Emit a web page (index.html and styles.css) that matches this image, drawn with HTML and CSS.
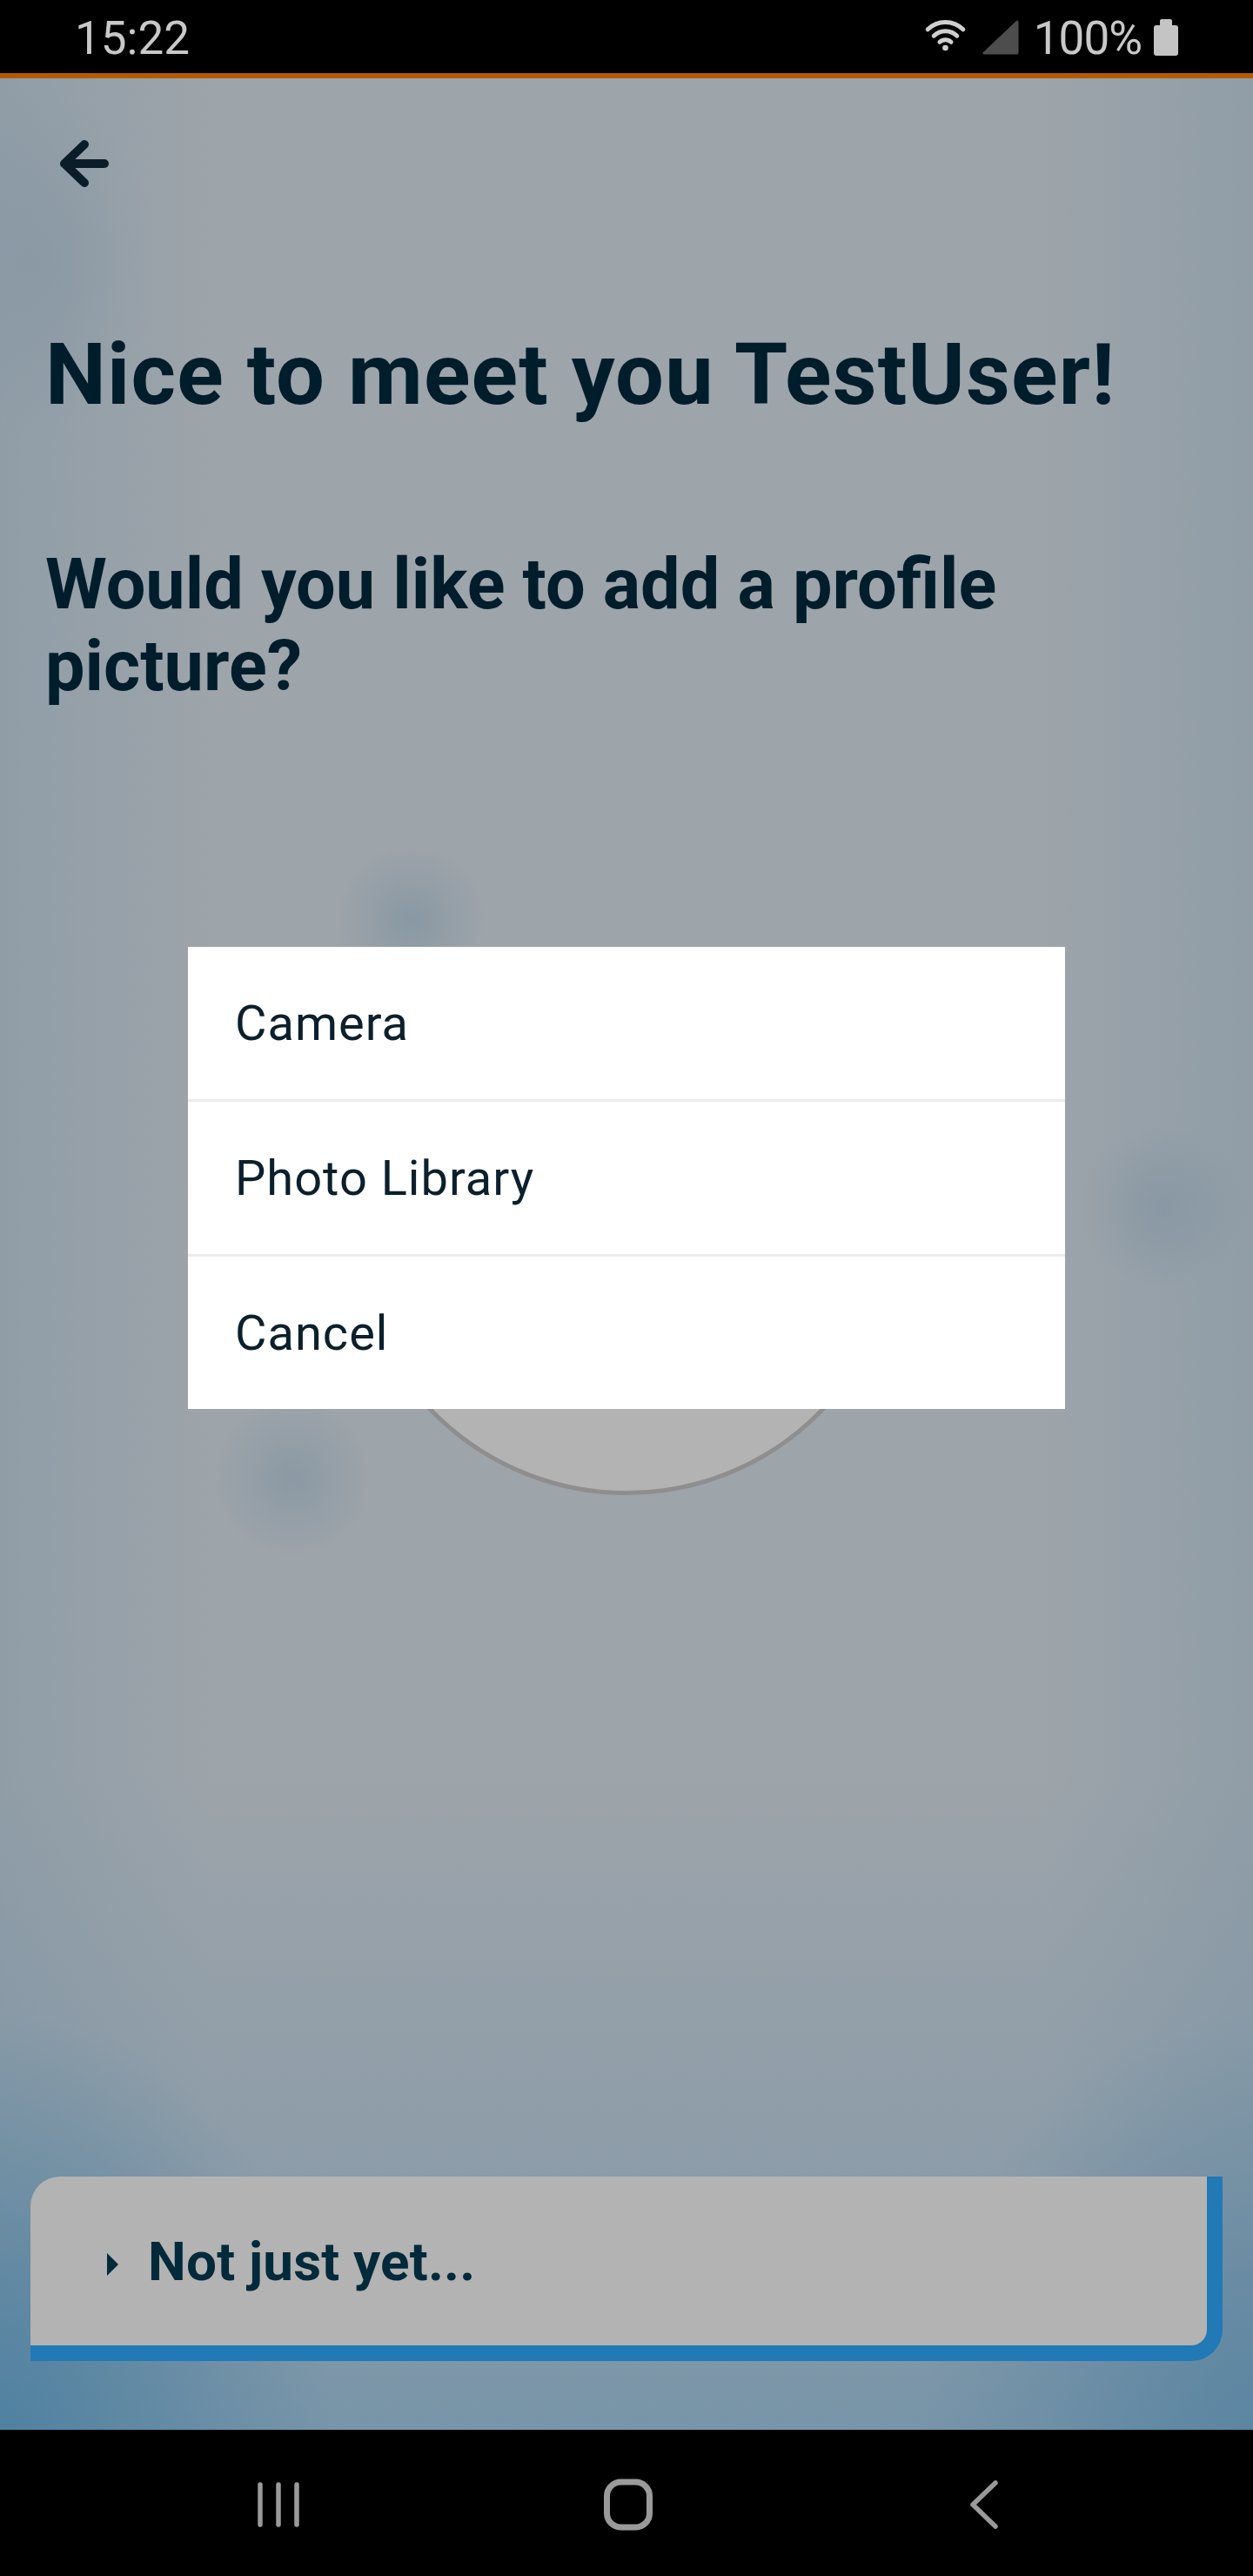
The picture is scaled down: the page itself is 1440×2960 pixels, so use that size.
FILE: index.html
```html
<!DOCTYPE html>
<html lang="en">
<head>
<meta charset="utf-8">
<title>Profile picture</title>
<link rel="stylesheet" href="styles.css">
</head>
<body>
<div class="phone">
  <header class="statusbar">
    <span class="time">15:22</span>
    <div class="status-icons">
      <svg class="wifi" width="54" height="42" viewBox="0 0 54 42">
        <path d="M6.2 14.8 A29 29 0 0 1 46.8 14.8" fill="none" stroke="#cfcfcf" stroke-width="5" stroke-linecap="round"/>
        <path d="M13.2 22.2 A19 19 0 0 1 39.8 22.2" fill="none" stroke="#cfcfcf" stroke-width="5" stroke-linecap="round"/>
        <path d="M20 29.3 A9.5 9.5 0 0 1 33 29.3" fill="none" stroke="#cfcfcf" stroke-width="5" stroke-linecap="round"/>
        <circle cx="26.5" cy="36" r="3.3" fill="#cfcfcf"/>
      </svg>
      <svg class="signal" width="44" height="42" viewBox="0 0 44 42">
        <polygon points="3,39 41,39 41,3" fill="#4d4d4d" stroke="#4d4d4d" stroke-width="3" stroke-linejoin="round"/>
      </svg>
      <span class="battery-pct">100%</span>
      <span class="battery"><span class="battery-nub"></span><span class="battery-body"></span></span>
    </div>
  </header>
  <div class="accent"></div>

  <main class="screen">
    <button class="back" aria-label="Back">
      <svg width="64" height="64" viewBox="0 0 64 64">
        <path d="M32 10 L9 32 L32 54 M9 32 L55 32" fill="none" stroke="#0b1d29" stroke-width="10" stroke-linecap="round" stroke-linejoin="round"/>
      </svg>
    </button>
    <h1 class="title">Nice to meet you TestUser!</h1>
    <h2 class="subtitle">Would you like to add a profile picture?</h2>
    <div class="avatar"></div>

    <button class="later">
      <span class="caret"></span>
      <span class="later-text">Not just yet...</span>
    </button>

    <div class="sheet" role="dialog">
      <div class="sheet-item">Camera</div>
      <div class="sheet-item">Photo Library</div>
      <div class="sheet-item">Cancel</div>
    </div>
  </main>

  <nav class="navbar">
    <svg class="nav-recents" width="56" height="56" viewBox="0 0 56 56">
      <path d="M7 5 V51 M28 5 V51 M49 5 V51" stroke="#9a9a9a" stroke-width="5.5" stroke-linecap="round"/>
    </svg>
    <svg class="nav-home" width="60" height="60" viewBox="0 0 60 60">
      <rect x="5.5" y="4" width="49" height="52" rx="16" ry="16" fill="none" stroke="#9a9a9a" stroke-width="7"/>
    </svg>
    <svg class="nav-back" width="40" height="60" viewBox="0 0 40 60">
      <path d="M34 5 L8 30 L34 55" fill="none" stroke="#9a9a9a" stroke-width="5.5" stroke-linecap="round" stroke-linejoin="round"/>
    </svg>
  </nav>
</div>
</body>
</html>
```

FILE: styles.css
```css
* { box-sizing: border-box; }

html, body {
  margin: 0;
  padding: 0;
  background: #000;
}

body {
  font-family: Roboto, "Noto Sans", "Liberation Sans", sans-serif;
}

.phone {
  width: 1440px;
  height: 2960px;
  display: flex;
  flex-direction: column;
  overflow: hidden;
}

/* ---------- status bar ---------- */
.statusbar {
  height: 84px;
  background: #000;
  display: flex;
  align-items: center;
  justify-content: space-between;
  padding: 0 86px 0 86px;
  color: #c8c8c8;
  flex: none;
}

.time {
  font-size: 53px;
  line-height: 1;
  margin-top: 4px;
}

.status-icons {
  display: flex;
  align-items: center;
  height: 84px;
}

.wifi { margin-top: -4px; }
.signal { margin-left: 14px; margin-top: 2px; }

.battery-pct {
  font-size: 53px;
  line-height: 1;
  margin-left: 16px;
  letter-spacing: -1px;
  margin-top: 4px;
}

.battery {
  display: flex;
  flex-direction: column;
  align-items: center;
  margin-left: 14px;
  margin-top: 2px;
}

.battery-nub {
  width: 14px;
  height: 7px;
  background: #c4c4c4;
  border-radius: 2px 2px 0 0;
}

.battery-body {
  width: 28px;
  height: 35px;
  background: #c4c4c4;
  border-radius: 3px;
}

.accent {
  height: 6px;
  background: #b35b00;
  flex: none;
}

/* ---------- main screen ---------- */
.screen {
  position: relative;
  flex: none;
  height: 2702px;
  display: flex;
  flex-direction: column;
  background-color: #9da4aa;
  background-image:
    radial-gradient(circle 85px at 472px 967px, rgba(120,142,158,0.55), rgba(120,142,158,0) 100%),
    radial-gradient(circle 95px at 1336px 1297px, rgba(120,142,158,0.45), rgba(120,142,158,0) 100%),
    radial-gradient(circle 90px at 336px 1608px, rgba(120,142,158,0.5), rgba(120,142,158,0) 100%),
    radial-gradient(ellipse 140px 200px at 40px 210px, rgba(125,145,160,0.4), rgba(125,145,160,0) 100%),
    radial-gradient(ellipse 380px 480px at 0px 2702px, rgba(70,125,160,0.8), rgba(70,125,160,0) 100%),
    radial-gradient(ellipse 380px 480px at 1440px 2702px, rgba(80,128,160,0.7), rgba(80,128,160,0) 100%),
    linear-gradient(to right, rgba(110,140,160,0.28) 0px, rgba(110,140,160,0) 240px, rgba(110,140,160,0) 1200px, rgba(110,140,160,0.28) 1440px),
    linear-gradient(to bottom, rgba(0,0,0,0) 0px, rgba(0,0,0,0) 1950px, rgba(105,140,165,0.35) 2450px, rgba(100,140,168,0.65) 2702px);
}

.back {
  align-self: flex-start;
  margin: 66px 0 0 65px;
  padding: 0;
  width: 64px;
  height: 64px;
  border: 0;
  background: none;
  display: block;
}

.back svg { display: block; }

.title {
  margin: 153px 0 0 0;
  padding-left: 52px;
  font-size: 99px;
  line-height: 115px;
  font-weight: 700;
  color: #001d2c;
  letter-spacing: 1.2px;
  white-space: nowrap;
}

.subtitle {
  margin: 137px 0 0 0;
  padding: 0 200px 0 52px;
  font-size: 81px;
  line-height: 94px;
  font-weight: 700;
  color: #001d2c;
}

.avatar {
  align-self: center;
  margin-top: 275px;
  width: 630px;
  height: 630px;
  border-radius: 50%;
  background: #b3b3b3;
  border: 5px solid #8e8e8e;
  flex: none;
}

.later {
  margin: auto 35px 79px 35px;
  height: 212px;
  flex: none;
  display: flex;
  align-items: center;
  padding: 0 0 0 88px;
  background: #b3b3b3;
  border: 0;
  border-right: 18px solid #2179b5;
  border-bottom: 18px solid #2179b5;
  border-radius: 34px 0 36px 0;
  font-family: inherit;
  text-align: left;
}

.caret {
  width: 0;
  height: 0;
  border-top: 13px solid transparent;
  border-bottom: 13px solid transparent;
  border-left: 13px solid #022a3a;
  margin-top: 8px;
}

.later-text {
  margin-left: 34px;
  font-size: 62px;
  font-weight: 700;
  color: #022a3a;
  letter-spacing: 0.2px;
}

/* ---------- action sheet ---------- */
.sheet {
  position: absolute;
  left: 216px;
  top: 998px;
  width: 1008px;
  background: #fff;
  display: flex;
  flex-direction: column;
}

.sheet-item {
  height: 175px;
  display: flex;
  align-items: center;
  padding-left: 54px;
  font-size: 56px;
  letter-spacing: 1px;
  color: #0b1f2c;
}

.sheet-item + .sheet-item {
  border-top: 3px solid #ececec;
  height: 178px;
}

/* ---------- nav bar ---------- */
.navbar {
  height: 168px;
  background: #000;
  flex: none;
  display: flex;
  align-items: center;
  padding-top: 4px;
}

.nav-recents { margin-left: 292px; }
.nav-home { margin-left: 344px; }
.nav-back { margin-left: 358px; }
```
